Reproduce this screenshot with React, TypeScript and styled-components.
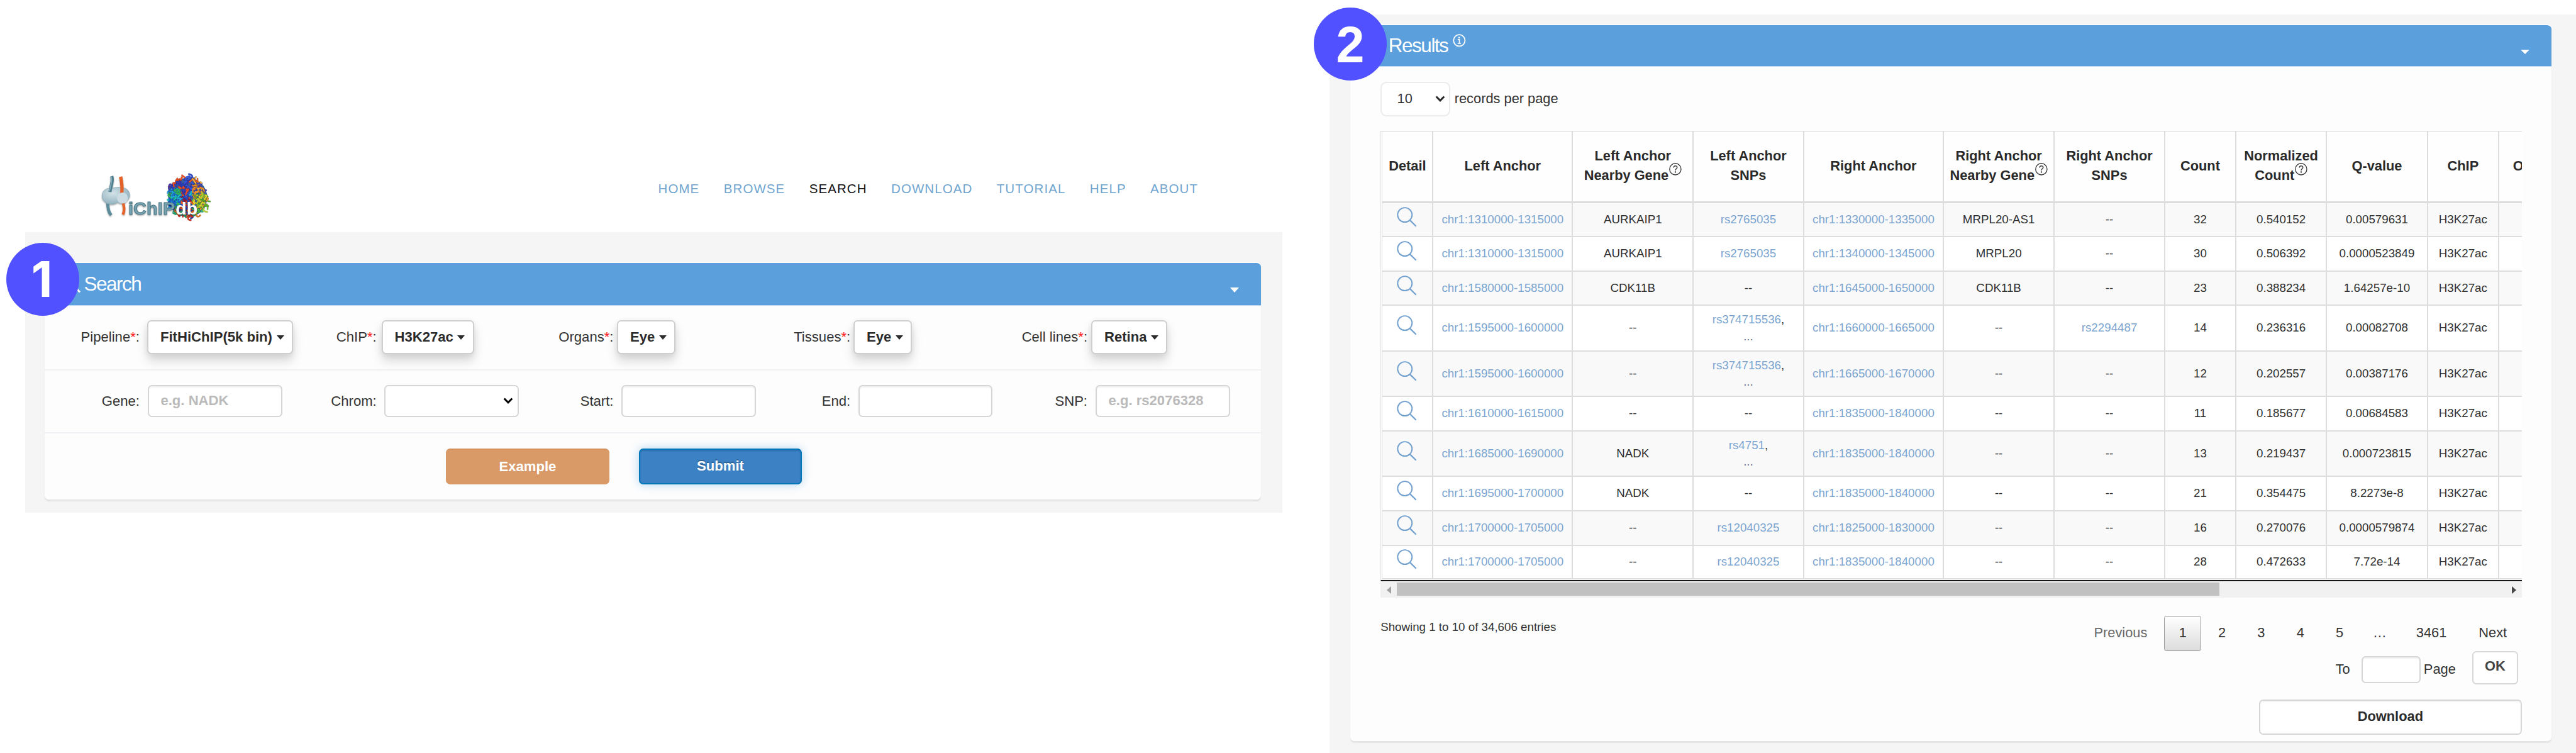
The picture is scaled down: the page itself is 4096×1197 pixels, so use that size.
import React from "react";
import styled, { createGlobalStyle, css } from "styled-components";

const GlobalStyle = createGlobalStyle`
  html, body {
    margin: 0;
    padding: 0;
    background: #fff;
    overflow: hidden;
  }
  *, *::before, *::after { box-sizing: border-box; }
  button, input, select { font-family: inherit; margin: 0; }
`;

const Canvas = styled.main`
  position: relative;
  display: flex;
  align-items: flex-start;
  width: 4355px;
  height: 1273px;
  zoom: 0.94053;
  overflow: hidden;
  background: #fff;
  color: #333;
  font-family: "Liberation Sans", Arial, sans-serif;
  font-size: 23.5px;
`;

/* ---------- shared panel parts ---------- */

const Badge = styled.div<{ $x: number; $y: number; $font?: string; $size: number; $drop: number; $nudge?: number }>`
  position: absolute;
  left: ${(p) => p.$x}px;
  top: ${(p) => p.$y}px;
  width: 123.5px;
  height: 123.5px;
  border-radius: 50%;
  background: #5151ff;
  color: #fff;
  display: flex;
  align-items: center;
  justify-content: center;
  padding-top: ${(p) => p.$drop}px;
  padding-right: ${(p) => p.$nudge ?? 0}px;
  font-family: ${(p) => p.$font ?? '"Liberation Sans", Arial'}, sans-serif;
  font-size: ${(p) => p.$size}px;
  font-weight: 700;
  line-height: 1;
`;

const Panel = styled.section<{ $height: number }>`
  height: ${(p) => p.$height}px;
  background: #fdfdfd;
  border-radius: 7px;
  box-shadow: 0 3px 2px rgba(0, 0, 0, 0.07);
`;

const PanelHeader = styled.header<{ $height: number; $indent: number }>`
  display: flex;
  align-items: center;
  height: ${(p) => p.$height}px;
  padding: 0 37.5px 0 ${(p) => p.$indent}px;
  border-top: 1.5px solid #fff;
  border-bottom: 1.5px solid #b5d4f0;
  border-radius: 7px 7px 0 0;
  background: #5b9fdd;
  background-clip: padding-box;
  color: #fff;
`;

const PanelTitle = styled.h2`
  margin: 0;
  font-size: 33.5px;
  font-weight: 400;
  letter-spacing: -1.6px;
  line-height: 40px;
`;

const Caret = styled.span<{ $w: number; $h: number }>`
  border-left: ${(p) => p.$w / 2}px solid transparent;
  border-right: ${(p) => p.$w / 2}px solid transparent;
  border-top: ${(p) => p.$h}px solid currentColor;
`;

const Collapse = styled.span`
  display: flex;
  margin-left: auto;
  padding-top: 21px;
`;

/* ---------- left: search page ---------- */

const SearchPage = styled.div`
  width: 2126px;
  margin-left: 42px;
  flex: none;
`;

const TopBar = styled.div`
  display: flex;
  justify-content: space-between;
  align-items: flex-start;
  height: 392px;
  padding: 280px 142.5px 0 108px;
`;

const Nav = styled.nav`
  display: flex;
  gap: 40.8px;
  line-height: 78px;
`;

const NavItem = styled.a<{ $active?: boolean }>`
  font-size: 21.8px;
  letter-spacing: 1.15px;
  color: ${(p) => (p.$active ? "#111" : "#6fa5cf")};
`;

const SearchArea = styled.div`
  height: 475px;
  padding: 51px 36px 0 34px;
  background: #f5f5f5;
`;

const FormRow = styled.div<{ $height: number; $line?: string }>`
  display: grid;
  grid-template-columns: repeat(5, 400.6px);
  height: ${(p) => p.$height}px;
  padding-top: 25px;
  border-bottom: 2.2px solid ${(p) => p.$line ?? "#f2f2f4"};
`;

const Field = styled.div<{ $gap: number; $height: number }>`
  display: flex;
  align-items: center;
  gap: ${(p) => p.$gap}px;
  height: ${(p) => p.$height}px;
`;

const Label = styled.label`
  width: 160px;
  flex: none;
  text-align: right;
  white-space: nowrap;
`;

const Star = styled.span`
  color: #f22;
`;

const DropButton = styled.button`
  display: flex;
  align-items: center;
  gap: 7px;
  height: 57px;
  padding: 0 13px 0 20px;
  border: 2.2px solid #cfcfcf;
  border-radius: 7px;
  background: #fff;
  color: #2b2b2b;
  font-size: 23.5px;
  font-weight: 700;
  white-space: nowrap;
  box-shadow: 0 12px 18px rgba(0, 0, 0, 0.14), 0 3px 10px rgba(0, 0, 0, 0.07);
`;

const TextInput = styled.input<{ $w: number; $h: number }>`
  width: ${(p) => p.$w}px;
  height: ${(p) => p.$h}px;
  padding: 0 20px 1px;
  border: 2.2px solid #d6d6d6;
  border-radius: 7px;
  background: #fff;
  box-shadow: inset 0 2px 2px rgba(0, 0, 0, 0.06);
  font-size: 23.5px;
  font-weight: 700;
  outline: none;
  &::placeholder { color: #bababa; opacity: 1; }
`;

const SelectBox = styled.div<{ $w: number; $h: number; $soft?: boolean }>`
  display: flex;
  align-items: center;
  justify-content: space-between;
  width: ${(p) => p.$w}px;
  height: ${(p) => p.$h}px;
  padding: ${(p) => (p.$soft ? "0 6px 0 26px" : "0 7px 0 20px")};
  border: 2.2px solid ${(p) => (p.$soft ? "#ebeded" : "#d6d6d6")};
  border-radius: ${(p) => (p.$soft ? 10 : 7)}px;
  background: #fff;
`;

const Actions = styled.div`
  display: flex;
  justify-content: center;
  gap: 50.5px;
  padding: 25.5px 98px 0 0;
`;

const ActionButton = styled.button<{ $primary?: boolean }>`
  width: 275.5px;
  height: 60.5px;
  border-radius: 7px;
  color: #fff;
  font-size: 23.5px;
  font-weight: 700;
  padding: 0 0 1px;
  ${(p) =>
    p.$primary
      ? css`
          border: 2.4px solid #0077b9;
          background: #3b81c3;
          box-shadow: 0 0 16px rgba(60, 150, 220, 0.4), inset 0 2px 2px rgba(0, 60, 120, 0.25);
          text-shadow: 0 -2px 0 rgba(0, 0, 0, 0.25);
        `
      : css`
          border: 0;
          border-top: 3px solid #d29262;
          background: #da9a68;
        `}
`;

/* ---------- right: results ---------- */

const ResultsArea = styled.div`
  flex: none;
  width: 2107.5px;
  height: 1249px;
  margin: 24.5px 0 0 79.5px;
  padding: 17px 41.3px 0 35.5px;
  background: #f5f5f5;
`;

const ResultsBody = styled.div`
  padding: 25.5px 50px 0 51px;
`;

const PageLength = styled.div`
  display: flex;
  align-items: center;
  gap: 7.5px;
  height: 57.5px;
  font-size: 23.2px;
`;

const TableViewport = styled.div`
  width: 1930px;
  height: 760.5px;
  margin-top: 25.5px;
  padding-left: 1.4px;
  overflow: hidden;
  border-left: 1.1px solid #e2e2e2;
  border-top: 1.6px solid #d5d5d5;
  border-bottom: 2.4px solid #151515;
  background: #fefefe;
`;

const Table = styled.table`
  table-layout: fixed;
  width: 2100px;
  border-collapse: separate;
  border-spacing: 0;
  text-align: center;
`;

const HeadCell = styled.th<{ $left?: boolean }>`
  height: 121px;
  padding: 0 0 3px ${(p) => (p.$left ? "23px" : "0")};
  border-right: 2.2px solid #ddd;
  border-bottom: 3.6px solid #ddd;
  font-size: 23.2px;
  line-height: 33.3px;
  color: #2a2a2a;
  white-space: nowrap;
  text-align: ${(p) => (p.$left ? "left" : "center")};
  &:first-child { border-left: 1.5px solid #ddd; }
`;

const BodyRow = styled.tr<{ $height: number; $odd: boolean }>`
  height: ${(p) => p.$height}px;
  background: ${(p) => (p.$odd ? "#f9f9f9" : "#fff")};
`;

const Cell = styled.td<{ $link?: boolean }>`
  padding: 0;
  border-right: 2.2px solid #ddd;
  border-bottom: 2.2px solid #ddd;
  font-size: 19.93px;
  line-height: 28px;
  color: ${(p) => (p.$link ? "#7ba5d0" : "#303030")};
  white-space: nowrap;
  &:first-child { border-left: 1.5px solid #ddd; }
`;

const Punct = styled.span`
  color: #333;
`;

const Dots = styled.div`
  color: #66708f;
`;

const LensWrap = styled.span`
  display: flex;
  justify-content: center;
  padding: 0 1px 9px 0;
  color: #72a0cf;
`;

const ScrollTrack = styled.div`
  display: flex;
  align-items: center;
  width: 1930px;
  height: 27px;
  margin-top: 1.5px;
  padding: 0 10px;
  background: #f1f1f1;
`;

const ScrollArrow = styled.span<{ $dir: "left" | "right" }>`
  border-top: 6.5px solid transparent;
  border-bottom: 6.5px solid transparent;
  ${(p) =>
    p.$dir === "left"
      ? "border-right: 7.5px solid #a0a0a0; margin-right: 10px;"
      : "border-left: 7.5px solid #484848; margin-left: auto;"}
`;

const ScrollThumb = styled.span`
  width: 1390.5px;
  height: 22.5px;
  margin-bottom: 2px;
  background: #c1c1c1;
`;

const Footer = styled.div`
  display: flex;
  justify-content: space-between;
  align-items: flex-start;
  margin-top: 30px;
`;

const Info = styled.div`
  font-size: 19.93px;
  line-height: 38px;
`;

const Pages = styled.div`
  display: flex;
  gap: 3.9px;
`;

const PageItem = styled.span<{ $w: number; $current?: boolean; $muted?: boolean }>`
  width: ${(p) => p.$w}px;
  height: 60px;
  display: flex;
  align-items: center;
  justify-content: center;
  padding-bottom: 1px;
  border: 1.6px solid ${(p) => (p.$current ? "#979797" : "transparent")};
  border-radius: 4px;
  background: ${(p) => (p.$current ? "linear-gradient(#fff, #dcdcdc)" : "none")};
  color: ${(p) => (p.$muted ? "#6a6a6a" : "#333")};
  font-size: 23.2px;
`;

const GoTo = styled.div`
  display: flex;
  justify-content: flex-end;
  align-items: center;
  height: 56px;
  padding-right: 6.5px;
  font-size: 23.2px;
  ${TextInput} { margin: 7px 5.5px 0 19px; }
`;

const GoToText = styled.span`
  padding-top: 5px;
`;

const OkButton = styled.button`
  width: 78px;
  height: 56px;
  margin-left: 27.5px;
  padding: 0 0 4px;
  border: 2.2px solid #d8d8d8;
  border-radius: 7px;
  background: #fff;
  color: #444;
  font-size: 23.2px;
  font-weight: 700;
`;

const DownloadButton = styled.button`
  display: block;
  width: 445px;
  height: 60px;
  margin: 25.5px 0 0 auto;
  padding: 0 0 2px;
  border: 2.2px solid #d6d6d6;
  border-radius: 7px;
  background: #fff;
  box-shadow: inset 0 2px 2px rgba(0, 0, 0, 0.05);
  color: #2b2b2b;
  font-size: 23.2px;
  font-weight: 700;
`;

/* ---------- icons ---------- */

const HelpSvg = styled.svg`
  display: inline-block;
  vertical-align: 7.5px;
  margin: -12px 0 0 1px;
`;

const HelpIcon = () => (
  <HelpSvg width="21" height="21" viewBox="0 0 21 21" fill="none" stroke="#3c3c3c" strokeWidth="1.4">
    <circle cx="10.5" cy="10.5" r="9.7" />
    <path d="M7.6 8.1c0-4 6-4 6-.6 0 2.2-3 2.6-3 5.2" strokeWidth="1.6" />
    <circle cx="10.6" cy="15.3" r=".6" fill="#3c3c3c" />
  </HelpSvg>
);

const InfoSvg = styled.svg`
  margin: 0 0 18px 8px;
`;

const InfoIcon = () => (
  <InfoSvg width="22" height="22" viewBox="0 0 22 22" fill="none" stroke="#fff">
    <circle cx="11" cy="11" r="9.7" strokeWidth="1.9" />
    <circle cx="10.8" cy="6.2" r="1.5" fill="#fff" stroke="none" />
    <path d="M8.4 9.4h2.8v6.5M8.2 16h5.6" strokeWidth="1.7" />
  </InfoSvg>
);

const Lens = () => (
  <LensWrap>
    <svg width="34" height="34" viewBox="0 0 34 34" fill="none" stroke="currentColor" strokeWidth="2.1">
      <circle cx="13.6" cy="13.4" r="12.2" />
      <path d="M22 22.2L32.6 32.8" strokeWidth="2.3" />
    </svg>
  </LensWrap>
);

const TitleLensSvg = styled.svg`
  margin: 0 6px 4px 0;
`;

const TitleLens = () => (
  <TitleLensSvg width="32" height="32" viewBox="0 0 32 32" fill="none" stroke="#fff">
    <circle cx="13" cy="11" r="9" strokeWidth="3" />
    <path d="M20 19L30.8 31.4" strokeWidth="3.2" />
  </TitleLensSvg>
);

const Chevron = ({ color = "#000" }: { color?: string }) => (
  <svg width="17" height="11" viewBox="0 0 17 11" fill="none" stroke={color} strokeWidth="3.2">
    <path d="M1.8 1.6l6.7 6.8 6.7-6.8" />
  </svg>
);

/* Tangled ribbon ball of the logo, coloured by region. */
const makeRibbons = () => {
  let seed = 11;
  const rnd = () => {
    seed = (seed * 16807) % 2147483647;
    return seed / 2147483647;
  };
  const tones = (x: number, y: number): string[] => {
    if (y > 18) return x < 8 ? ["#d4301c", "#22a06a", "#ee6a1c", "#2a3ca0"] : ["#4cc044", "#e0701c", "#2cb474", "#b4d02c"];
    if (x > 8 && y > -10) return ["#b4d42b", "#e8d42a", "#7ac82e", "#f09426", "#56ac2a"];
    if (x > 8) return ["#f08825", "#e85a1e", "#4844b4", "#f4b038"];
    if (x < -12 && y > -14) return ["#22a0e4", "#1cc8c0", "#34b452", "#1c64d0"];
    if (y < -6) return ["#2a42c4", "#3456e0", "#4434a8", "#ee4a1e"];
    return ["#e0241c", "#2448cc", "#f4501c", "#8c1c44", "#20b4d0"];
  };
  const out: { d: string; c: string }[] = [];
  for (let i = 0; i < 300; i++) {
    const a = rnd() * Math.PI * 2;
    const r = Math.sqrt(rnd()) * 34;
    const x = Math.cos(a) * r;
    const y = Math.sin(a) * r;
    const j = () => (rnd() - 0.5) * 14;
    const set = tones(x, y);
    out.push({
      d: `M${x.toFixed(1)} ${y.toFixed(1)}q${j().toFixed(1)} ${j().toFixed(1)} ${j().toFixed(1)} ${j().toFixed(1)}`,
      c: set[Math.floor(rnd() * set.length)],
    });
  }
  return out;
};
const ribbons = makeRibbons();

const LogoText = styled.text`
  font-family: "Liberation Sans", Arial, sans-serif;
  font-size: 28.5px;
  font-weight: 700;
`;

const Logo = () => (
  <svg width="230" height="110" viewBox="0 0 230 110" fill="none">
    <defs>
      <radialGradient id="bead" cx=".4" cy=".35" r=".7">
        <stop offset="0" stopColor="#d3e2e8" />
        <stop offset="1" stopColor="#8fb0bd" />
      </radialGradient>
      <filter id="soft" x="-10%" y="-10%" width="120%" height="130%">
        <feDropShadow dx="0" dy="1.4" stdDeviation="1" floodColor="#000" floodOpacity=".4" />
      </filter>
    </defs>
    <g transform="translate(167.5 54)" strokeLinecap="round">
      <circle r="33" fill="#3a5f9c" />
      {ribbons.map((s, i) => (
        <React.Fragment key={i}>
          <path d={s.d} stroke="#14203a" strokeOpacity=".3" strokeWidth="3.3" />
          <path d={s.d} stroke={s.c} strokeWidth="2.4" />
        </React.Fragment>
      ))}
    </g>
    <g filter="url(#soft)">
      {/* lower strands */}
      <path d="M32 64c1 9 1 14 6 20" stroke="#5c8b9a" strokeWidth="5.2" />
      <path d="M58 62c2 9 3 14 0 21" stroke="#e2622a" strokeWidth="4.6" />
      {/* bound proteins */}
      <path d="M23 49c1-8 9-12 16-10 6-3 20-3 25 1 7 5 7 15 0 20-4 5-12 5-15 2-6 5-17 5-22-1-4-3-5-8-4-12z" fill="url(#bead)" stroke="#86a6b3" strokeWidth=".8" />
      {/* upper strands */}
      <path d="M39 18c3 9-2 17-3 27" stroke="#4d7f8f" strokeWidth="5.4" />
      <path d="M38 19c3 8-2 17-3 25" stroke="#8db2be" strokeWidth="1.6" />
      <path d="M54 19c2 9 3 17 2 28" stroke="#e2622a" strokeWidth="5.6" />
      <circle cx="57" cy="55" r="9.3" fill="#cbdbe1" />
      <LogoText x="67" y="83" textLength="79" lengthAdjust="spacingAndGlyphs" fill="#79a3b0" stroke="#41707f" strokeWidth=".9">iChIP</LogoText>
      <LogoText x="147" y="83" textLength="37" lengthAdjust="spacingAndGlyphs" fill="#fff">db</LogoText>
    </g>
  </svg>
);

/* ---------- data ---------- */

const navItems = ["HOME", "BROWSE", "SEARCH", "DOWNLOAD", "TUTORIAL", "HELP", "ABOUT"];

const dropFields = [
  { label: "Pipeline", value: "FitHiChIP(5k bin)", gap: 13 },
  { label: "ChIP", value: "H3K27ac", gap: 8.5 },
  { label: "Organs", value: "Eye", gap: 6 },
  { label: "Tissues", value: "Eye", gap: 5.2 },
  { label: "Cell lines", value: "Retina", gap: 6.6 },
];

const columnWidths = [87, 236, 204, 186.5, 236.5, 187, 187, 120, 153.5, 170.5, 120.5, 211];

type Row = [left: string, lGene: string, lSnp: string, right: string, rGene: string, rSnp: string, count: string, norm: string, q: string, height: number];

const rows: Row[] = [
  ["1310000-1315000", "AURKAIP1", "rs2765035", "1330000-1335000", "MRPL20-AS1", "--", "32", "0.540152", "0.00579631", 57.5],
  ["1310000-1315000", "AURKAIP1", "rs2765035", "1340000-1345000", "MRPL20", "--", "30", "0.506392", "0.0000523849", 58.5],
  ["1580000-1585000", "CDK11B", "--", "1645000-1650000", "CDK11B", "--", "23", "0.388234", "1.64257e-10", 57.5],
  ["1595000-1600000", "--", "rs374715536,", "1660000-1665000", "--", "rs2294487", "14", "0.236316", "0.00082708", 77.2],
  ["1595000-1600000", "--", "rs374715536,", "1665000-1670000", "--", "--", "12", "0.202557", "0.00387176", 77.1],
  ["1610000-1615000", "--", "--", "1835000-1840000", "--", "--", "11", "0.185677", "0.00684583", 57.8],
  ["1685000-1690000", "NADK", "rs4751,", "1835000-1840000", "--", "--", "13", "0.219437", "0.000723815", 77.1],
  ["1695000-1700000", "NADK", "--", "1835000-1840000", "--", "--", "21", "0.354475", "8.2273e-8", 57.9],
  ["1700000-1705000", "--", "rs12040325", "1825000-1830000", "--", "--", "16", "0.270076", "0.0000579874", 58.6],
  ["1700000-1705000", "--", "rs12040325", "1835000-1840000", "--", "--", "28", "0.472633", "7.72e-14", 56.3],
];

const SnpCell = ({ value }: { value: string }) => {
  if (value === "--") return <Cell>--</Cell>;
  if (!value.endsWith(",")) return <Cell $link>{value}</Cell>;
  return (
    <Cell $link>
      {value.slice(0, -1)}
      <Punct>,</Punct>
      <Dots>...</Dots>
    </Cell>
  );
};

const pages: { text: string; w: number; current?: boolean; muted?: boolean }[] = [
  { text: "Previous", w: 140, muted: true },
  { text: "1", w: 62.4, current: true },
  { text: "2", w: 62.4 },
  { text: "3", w: 62.4 },
  { text: "4", w: 62.4 },
  { text: "5", w: 62.4 },
  { text: "…", w: 65.5 },
  { text: "3461", w: 101.4 },
  { text: "Next", w: 98.6 },
];

export default function App() {
  return (
    <>
      <GlobalStyle />
      <Canvas>
        <SearchPage>
          <TopBar>
            <Logo />
            <Nav>
              {navItems.map((n) => (
                <NavItem key={n} $active={n === "SEARCH"}>{n}</NavItem>
              ))}
            </Nav>
          </TopBar>
          <SearchArea>
            <Panel $height={401.5}>
              <PanelHeader $height={74} $indent={28}>
                <TitleLens />
                <PanelTitle>Search</PanelTitle>
                <Collapse><Caret $w={16} $h={9} /></Collapse>
              </PanelHeader>
              <FormRow $height={109}>
                {dropFields.map((f) => (
                  <Field key={f.label} $gap={f.gap} $height={56}>
                    <Label>{f.label}<Star>*</Star>:</Label>
                    <DropButton>{f.value}<Caret $w={13} $h={7.5} /></DropButton>
                  </Field>
                ))}
              </FormRow>
              <FormRow $height={106.5} $line="#f0f0f6">
                <Field $gap={13.5} $height={54}>
                  <Label>Gene:</Label>
                  <TextInput $w={228} $h={54} placeholder="e.g. NADK" />
                </Field>
                <Field $gap={13.5} $height={54}>
                  <Label>Chrom:</Label>
                  <SelectBox $w={227} $h={54}><span /><Chevron /></SelectBox>
                </Field>
                <Field $gap={13.5} $height={54}>
                  <Label>Start:</Label>
                  <TextInput $w={227} $h={54} />
                </Field>
                <Field $gap={13.5} $height={54}>
                  <Label>End:</Label>
                  <TextInput $w={227} $h={54} />
                </Field>
                <Field $gap={13.5} $height={54}>
                  <Label>SNP:</Label>
                  <TextInput $w={228} $h={54} placeholder="e.g. rs2076328" />
                </Field>
              </FormRow>
              <Actions>
                <ActionButton>Example</ActionButton>
                <ActionButton $primary>Submit</ActionButton>
              </Actions>
            </Panel>
          </SearchArea>
        </SearchPage>

        <ResultsArea>
          <Panel $height={1210.5}>
            <PanelHeader $height={71.5} $indent={64.5}>
              <PanelTitle>Results</PanelTitle>
              <InfoIcon />
              <Collapse><Caret $w={15} $h={8.5} /></Collapse>
            </PanelHeader>
            <ResultsBody>
              <PageLength>
                <SelectBox $w={117.5} $h={58} $soft>10<Chevron color="#2b2b2b" /></SelectBox>
                <span>records per page</span>
              </PageLength>
              <TableViewport>
                <Table>
                  <colgroup>
                    {columnWidths.map((w, i) => <col key={i} width={w} />)}
                  </colgroup>
                  <thead>
                    <tr>
                      <HeadCell>Detail</HeadCell>
                      <HeadCell>Left Anchor</HeadCell>
                      <HeadCell>Left Anchor<br />Nearby Gene<HelpIcon /></HeadCell>
                      <HeadCell>Left Anchor<br />SNPs</HeadCell>
                      <HeadCell>Right Anchor</HeadCell>
                      <HeadCell>Right Anchor<br />Nearby Gene<HelpIcon /></HeadCell>
                      <HeadCell>Right Anchor<br />SNPs</HeadCell>
                      <HeadCell>Count</HeadCell>
                      <HeadCell>Normalized<br />Count<HelpIcon /></HeadCell>
                      <HeadCell>Q-value</HeadCell>
                      <HeadCell>ChIP</HeadCell>
                      <HeadCell $left>O</HeadCell>
                    </tr>
                  </thead>
                  <tbody>
                    {rows.map((r, i) => (
                      <BodyRow key={i} $height={r[9]} $odd={i % 2 === 0}>
                        <Cell><Lens /></Cell>
                        <Cell $link>chr1:{r[0]}</Cell>
                        <Cell>{r[1]}</Cell>
                        <SnpCell value={r[2]} />
                        <Cell $link>chr1:{r[3]}</Cell>
                        <Cell>{r[4]}</Cell>
                        <SnpCell value={r[5]} />
                        <Cell>{r[6]}</Cell>
                        <Cell>{r[7]}</Cell>
                        <Cell>{r[8]}</Cell>
                        <Cell>H3K27ac</Cell>
                        <Cell />
                      </BodyRow>
                    ))}
                  </tbody>
                </Table>
              </TableViewport>
              <ScrollTrack>
                <ScrollArrow $dir="left" />
                <ScrollThumb />
                <ScrollArrow $dir="right" />
              </ScrollTrack>
              <Footer>
                <Info>Showing 1 to 10 of 34,606 entries</Info>
                <Pages>
                  {pages.map((p) => (
                    <PageItem key={p.text} $w={p.w} $current={p.current} $muted={p.muted}>{p.text}</PageItem>
                  ))}
                </Pages>
              </Footer>
              <GoTo>
                <GoToText>To</GoToText>
                <TextInput $w={100} $h={46} />
                <GoToText>Page</GoToText>
                <OkButton>OK</OkButton>
              </GoTo>
              <DownloadButton>Download</DownloadButton>
            </ResultsBody>
          </Panel>
        </ResultsArea>

        <Badge $x={11} $y={410.7} $size={83} $drop={0} $nudge={4} $font="Inter">1</Badge>
        <Badge $x={2221} $y={13} $size={86} $drop={2}>2</Badge>
      </Canvas>
    </>
  );
}
